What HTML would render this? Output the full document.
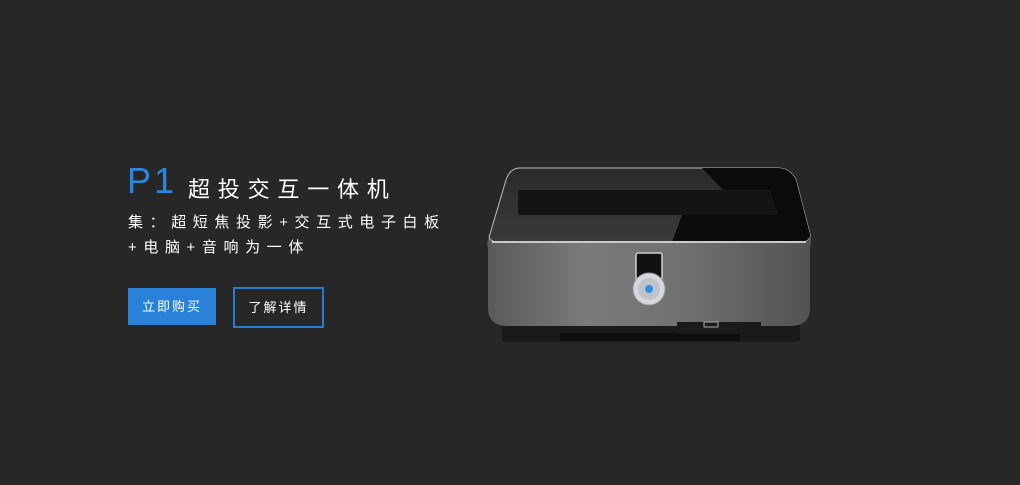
<!DOCTYPE html>
<html><head><meta charset="utf-8"><style>
body{margin:0;width:1020px;height:485px;background:#272727;overflow:hidden;position:relative;font-family:"Liberation Sans","Noto Sans CJK SC",sans-serif;color:#fff}
.a{position:absolute;white-space:nowrap}
</style></head><body>
<div class="a" style="left:127px;top:160px;font-size:36px;color:#2a86e0;font-family:'Liberation Sans',sans-serif;letter-spacing:3px;font-weight:300">P1</div>
<div class="a" style="left:188px;top:172px;font-size:22px;letter-spacing:7.8px">超投交互一体机</div>
<div class="a" style="left:128px;top:211px;font-size:15px;letter-spacing:6.6px">集：超短焦投影+交互式电子白板</div>
<div class="a" style="left:128px;top:236px;font-size:15px;letter-spacing:6.6px">+电脑+音响为一体</div>
<div class="a" style="left:128px;top:288px;width:88px;height:37px;background:#2a82d8;font-size:13px;line-height:37px;text-align:center;letter-spacing:2px">立即购买</div>
<div class="a" style="left:233px;top:287px;width:87px;height:37px;border:2px solid #2a7ad0;font-size:13px;line-height:37px;text-align:center;letter-spacing:2px">了解详情</div>
<svg class="a" style="left:480px;top:160px" width="340" height="190">
<defs>
<linearGradient id="f" x1="0" y1="0" x2="1" y2="0"><stop offset="0" stop-color="#5a5a5c"/><stop offset=".3" stop-color="#7a7a7c"/><stop offset=".6" stop-color="#717173"/><stop offset="1" stop-color="#525254"/></linearGradient>
<linearGradient id="t" x1="0" y1="0" x2="0" y2="1"><stop offset="0" stop-color="#2a2a2c"/><stop offset="1" stop-color="#3a3a3c"/></linearGradient>
</defs>
<rect x="22" y="160" width="298" height="22" rx="3" fill="#1a1a1a"/>
<rect x="80" y="173" width="180" height="8" fill="#0d0d0d"/>
<path d="M40 8 H298 Q310 8 316 20 L330 74 Q332 82 330 88 V148 Q330 165 312 166 H26 Q8 165 8 148 V88 Q6 82 10 74 L26 20 Q30 8 40 8Z" fill="url(#f)"/>
<path d="M40 8 H298 Q310 8 316 20 L330 74 Q331 80 322 82 H16 Q7 80 10 74 L26 20 Q30 8 40 8Z" fill="url(#t)" stroke="#bdbdbd" stroke-width="1"/>
<path d="M222 8 H298 Q310 8 316 20 L330 74 Q331 80 322 82 H192 L202 55 H262 V50 L222 8Z" fill="#0b0b0b"/>
<path d="M38 30 H290 L298 55 H38Z" fill="#141414"/>
<path d="M12 82 H326" stroke="#c9c9c9" stroke-width="2"/>
<rect x="197" y="162" width="84" height="12" fill="#1a1a1a"/>
<rect x="224" y="162" width="14" height="5" fill="none" stroke="#aaa" stroke-width="1"/>
<rect x="156" y="93" width="26" height="35" rx="2" fill="#111" stroke="#cfcfcf" stroke-width="1.5"/>
<circle cx="169" cy="129" r="16" fill="#d8d8dc" stroke="#999" stroke-width="1"/>
<circle cx="169" cy="129" r="11" fill="#bfc4c9"/>
<circle cx="169" cy="129" r="4" fill="#2f8fe6"/>
</svg>
</body></html>
